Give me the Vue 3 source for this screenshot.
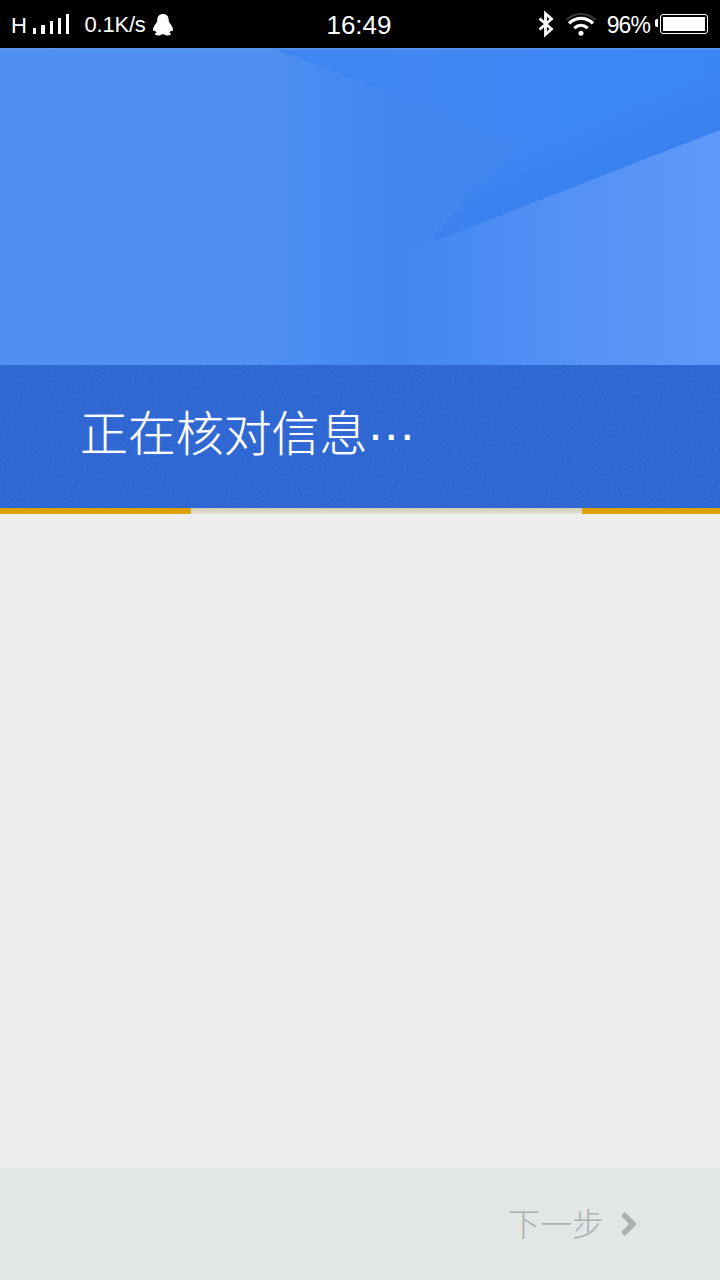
<template>
	<div class="screen">
		<header class="status-bar">
			<div class="status-left">
				<span class="net-type">H</span>
				<div class="signal">
					<i v-for="h in signalBars" :key="h" :style="{ height: h + 'px' }"></i>
				</div>
				<span class="speed">0.1K/s</span>
				<svg class="qq" width="22" height="24" viewBox="0 0 22 24">
					<path fill="#fff" d="M11 1C7 1 5.500 3.500 5.300 7c-.1 1.500-.5 2.300-1.500 3.500C2.500 12.300 1 14.500 1 16.500c0 1.800 1 2 2 .9.300 1 .9 1.800 1.600 2.400-1.200.5-1.800 1.100-1.500 1.800.4.900 3.400.9 5 .6 1-.2 1.700-.6 2-.9h1.800c.3.300 1 .7 2 .9 1.600.3 4.600.3 5-.6.300-.7-.3-1.300-1.500-1.800.7-.6 1.300-1.400 1.600-2.400 1 1.100 2 .9 2-.9 0-2-1.500-4.200-2.800-6-1-1.200-1.400-2-1.500-3.500C16.500 3.500 15 1 11 1z" />
				</svg>
			</div>
			<span class="clock">16:49</span>
			<div class="status-right">
				<svg class="bluetooth" width="16" height="26" viewBox="0 0 16 26">
					<path fill="none" stroke="#fff" stroke-width="2.800" d="M1.500 7.500L13.500 18 7.500 23.500V2.500L13.500 8 1.500 18.500" />
				</svg>
				<svg class="wifi" width="34" height="25" viewBox="0 0 32 24">
					<path fill="none" stroke="#3a3a3a" stroke-width="2" d="M2 7.500C10 0 22 0 30 7.500" />
					<path fill="none" stroke="#fff" stroke-width="3" d="M4.500 11c6.500-6.500 16.500-6.500 23 0" />
					<path fill="none" stroke="#fff" stroke-width="3" d="M9.500 15.500c4-3.500 9-3.500 13 0" />
					<circle cx="16" cy="20.500" r="2.400" fill="#fff" />
				</svg>
				<span class="percent">96%</span>
				<div class="battery"><div class="battery-fill"></div></div>
			</div>
		</header>

		<section class="hero">
			<svg class="hero-art" width="720" height="317" viewBox="0 0 720 317">
				<defs>
					<linearGradient id="baseGrad" gradientUnits="userSpaceOnUse" x1="0" y1="0" x2="720" y2="0">
						<stop offset="0" stop-color="#5090f3" />
						<stop offset="0.37" stop-color="#4f8ff3" />
						<stop offset="0.55" stop-color="#4286f0" />
						<stop offset="1" stop-color="#4286f0" />
					</linearGradient>
					<linearGradient id="rightGrad" gradientUnits="userSpaceOnUse" x1="396" y1="0" x2="720" y2="0">
						<stop offset="0" stop-color="#4286f0" />
						<stop offset="0.55" stop-color="#5592f6" />
						<stop offset="1" stop-color="#5f99f7" />
					</linearGradient>
					<linearGradient id="topGrad" gradientUnits="userSpaceOnUse" x1="272" y1="0" x2="720" y2="0">
						<stop offset="0" stop-color="#3f86f4" />
						<stop offset="0.35" stop-color="#4186f1" />
						<stop offset="0.65" stop-color="#3d86f5" />
						<stop offset="1" stop-color="#3c85f5" />
					</linearGradient>
					<linearGradient id="edgeShade" gradientUnits="userSpaceOnUse" x1="555" y1="85" x2="575" y2="138">
						<stop offset="0" stop-color="#3478e6" stop-opacity="0" />
						<stop offset="1" stop-color="#3478e6" stop-opacity="0.38" />
					</linearGradient>
					<filter id="grain" x="0" y="0" width="100%" height="100%">
						<feTurbulence type="fractalNoise" baseFrequency="0.8" numOctaves="2" seed="4" />
						<feColorMatrix values="0 0 0 0 1  0 0 0 0 1  0 0 0 0 1  0.5 0 0 0 -0.16" />
					</filter>
				</defs>
				<rect width="720" height="317" fill="url(#baseGrad)" />
				<polygon points="272,0 720,0 720,82 428,196 520,95" fill="url(#topGrad)" />
				<polygon points="720,21 720,82 428,196 500,106" fill="url(#edgeShade)" />
				<polygon points="720,82 396,208 396,317 720,317" fill="url(#rightGrad)" />
				<rect width="720" height="2" fill="#6a9ce6" opacity="0.5" />
			</svg>
		</section>

		<section class="title-band">
			<svg class="grain" width="720" height="143">
				<rect width="720" height="143" filter="url(#grain)" opacity="0.22" />
			</svg>
			<h1 class="title">正在核对信息···</h1>
		</section>

		<div class="progress">
			<div class="progress-edge left"></div>
			<div class="progress-mid"></div>
			<div class="progress-edge right"></div>
		</div>

		<main class="content"></main>

		<footer class="footer">
			<span class="next">下一步</span>
			<svg class="chevron" width="18" height="26" viewBox="0 0 18 26">
				<path fill="none" stroke="#acb0b1" stroke-width="5.500" d="M3 3l10 10L3 23" />
			</svg>
		</footer>
	</div>
</template>

<script setup>
const signalBars = [6, 9, 13, 16, 20];
</script>

<style>
html,
body {
	margin: 0;
	background: #eeeeee;
}
</style>

<style scoped>
.screen {
	width: 720px;
	height: 1280px;
	display: flex;
	flex-direction: column;
	overflow: hidden;
	font-family: 'Liberation Sans', 'Noto Sans CJK SC', sans-serif;
	background: #eeeeee;
}

.status-bar {
	height: 48px;
	flex: none;
	display: grid;
	grid-template-columns: 1fr auto 1fr;
	align-items: center;
	background: #000;
	color: #fff;
	padding: 0 12px 0 11px;
	box-sizing: border-box;
}

.status-left {
	display: flex;
	align-items: center;
}

.net-type {
	font-size: 22px;
	width: 22px;
	margin-top: 4px;
}

.signal {
	display: flex;
	align-items: flex-end;
	gap: 5px;
	height: 20px;
	margin-bottom: 1px;
}

.signal i {
	width: 3.300px;
	background: #fff;
}

.speed {
	font-size: 22px;
	margin-left: 15px;
	margin-top: 2px;
	letter-spacing: -0.2px;
}

.qq {
	margin-left: 6px;
	margin-top: 1px;
}

.clock {
	font-size: 26px;
	margin-top: 2px;
	margin-left: -1px;
}

.status-right {
	display: flex;
	align-items: center;
	justify-content: flex-end;
}

.bluetooth {
	margin-right: 10px;
}

.wifi {
	margin-right: 9px;
}

.percent {
	font-size: 23px;
	letter-spacing: -0.9px;
	margin-right: 10px;
	margin-top: 2px;
}

.battery {
	width: 48px;
	height: 20px;
	box-sizing: border-box;
	border: 1.500px solid #fff;
	border-radius: 3px;
	padding: 2px;
	position: relative;
}

.battery::before {
	content: '';
	position: absolute;
	left: -6px;
	top: 4px;
	width: 3px;
	height: 8px;
	background: #fff;
	border-radius: 2px 0 0 2px;
}

.battery-fill {
	height: 100%;
	background: #fff;
}

.hero {
	height: 317px;
	flex: none;
}

.hero-art {
	display: block;
}

.title-band {
	height: 143px;
	flex: none;
	background: #2c65d2;
	display: flex;
	align-items: center;
	padding-left: 80px;
	box-sizing: border-box;
	position: relative;
}

.grain {
	position: absolute;
	left: 0;
	top: 0;
}

.title {
	margin: -3px 0 0;
	font-size: 48px;
	font-weight: 300;
	color: #fff;
	line-height: 1;
	letter-spacing: -0.1px;
	text-shadow: 0 0 1px rgba(255, 255, 255, 0.5);
	position: relative;
}

.progress {
	height: 6px;
	flex: none;
	display: flex;
}

.progress-edge {
	background: linear-gradient(#d9a008, #e0a511);
}

.progress-edge.left {
	width: 191px;
}

.progress-edge.right {
	width: 138px;
}

.progress-mid {
	flex: 1;
	background: linear-gradient(#cfc8b4, #e6e3da);
}

.content {
	flex: 1;
}

.footer {
	height: 112px;
	flex: none;
	background: #e2e6e7;
	display: flex;
	align-items: center;
	justify-content: flex-end;
	padding-right: 82px;
	box-sizing: border-box;
}

.next {
	font-size: 32px;
	font-weight: 300;
	color: #acb0b1;
	margin-right: 16px;
	margin-top: -4px;
}
</style>
